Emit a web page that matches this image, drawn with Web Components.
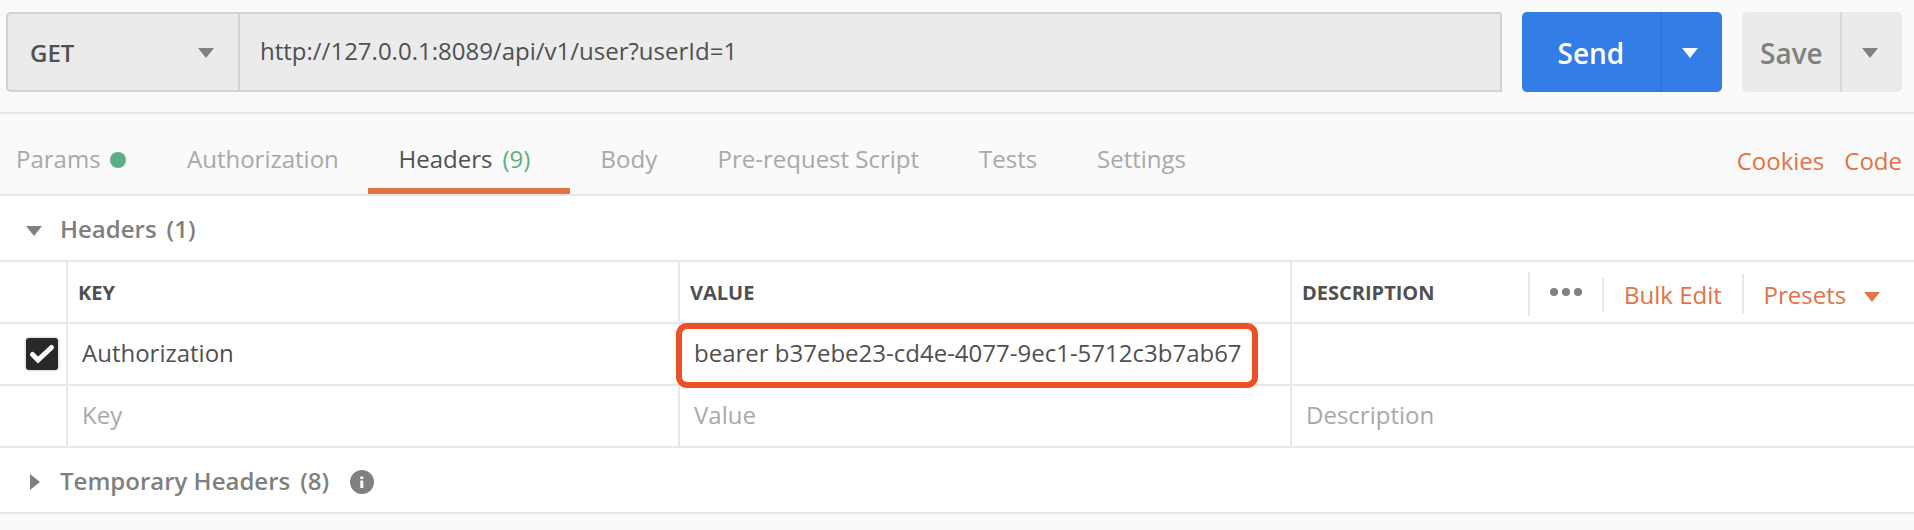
<!DOCTYPE html>
<html lang="en">
<head>
<meta charset="utf-8">
<title>Request builder</title>
<style>
html,body{margin:0;height:100%;background:#fafafa}
body{font:24px/32px "Open Sans","Noto Sans",sans-serif;color:#505050;overflow:hidden}
</style>
</head>
<body>
<request-builder></request-builder>
<script>
const define = (name, markup) => {
  const template = document.createElement('template');
  template.innerHTML = '<style>*{box-sizing:border-box}:host{box-sizing:border-box}</style>' + markup;
  customElements.define(name, class extends HTMLElement {
    constructor() {
      super();
      this.attachShadow({mode: 'open'}).append(template.content.cloneNode(true));
    }
  });
};

define('caret-icon', `
<style>
:host{display:block;width:16px;height:10px}
svg{display:block}
:host([side]){width:10px;height:16px}
:host([side]) .down,:host(:not([side])) .right{display:none}
</style>
<svg class="down" width="16" height="10" viewBox="0 0 16 10"><path d="M0 0h16L8 10z" fill="currentColor"/></svg>
<svg class="right" width="10" height="16" viewBox="0 0 10 16"><path d="M0 0v16l10-8z" fill="currentColor"/></svg>`);

define('split-button', `
<style>
:host{display:grid;grid-template-columns:1fr 62px;height:80px;border-radius:5px;overflow:hidden;background:#ebebeb;color:#808080;font-size:28px;font-weight:600;line-height:36px;--rule:#d9d9d9}
:host([primary]){background:#327de6;color:#fff;--rule:#2f74d9}
.label{padding:23px 0 0 var(--inset,18px)}
.menu{border-left:2px solid var(--rule);padding:36px 0 0 20px}
</style>
<div class="label"><slot></slot></div><div class="menu"><caret-icon></caret-icon></div>`);

define('url-bar', `
<style>
:host{display:grid;grid-template-columns:232px 1fr;width:1496px;height:80px;border:2px solid #d2d2d2;border-radius:5px 3px 0 5px;background:#ebebeb}
.method{display:flex;justify-content:space-between;border-right:2px solid #d2d2d2;padding:23px 24px 0 22px;font-weight:600}
caret-icon{margin-top:11px;color:#808080}
.url{padding:21px 0 0 20px}
</style>
<div class="method"><slot name="method"></slot><caret-icon></caret-icon></div><div class="url"><slot></slot></div>`);

define('tab-item', `
<style>
:host{display:flex;height:80px;padding:29px 0 0 30px;color:#a9a9a9;white-space:pre}
:host([active]){color:#505050;padding-left:30.5px;border-bottom:6px solid #e37245}
::slotted(i){width:16px;height:16px;border-radius:50%;background:#59b183;margin:9px 0 0 9px}
::slotted(b){font-weight:400;color:#59b183;margin-left:10px}
</style><slot></slot>`);

define('request-tabs', `
<style>
:host{display:flex;height:84px;border-top:2px solid #e8e8e8;border-bottom:2px solid #e8e8e8}
nav{display:grid;grid-template-columns:157px 211px 202px 117px 262px 118px 1fr;flex:1}
tab-item:first-child{padding-left:16px}
tab-item:nth-child(4),tab-item:nth-child(5){padding-left:30.5px}
aside{display:flex;gap:20px;padding:31px 12px 0 0;color:#e37245}
</style>
<nav>
<tab-item>Params<i></i></tab-item><tab-item>Authorization</tab-item><tab-item active>Headers<b>(9)</b></tab-item><tab-item>Body</tab-item><tab-item>Pre-request Script</tab-item><tab-item>Tests</tab-item><tab-item>Settings</tab-item>
</nav>
<aside><span>Cookies</span><span>Code</span></aside>`);

define('section-title', `
<style>
:host{display:grid;grid-template-columns:34px auto 1fr;height:64px;padding:17px 0 0 26px;color:#808080;font-weight:600;background:#fff}
caret-icon{margin-top:13px}
caret-icon[side]{margin:9px 0 0 4px}
:host(:not([closed])) caret-icon[side],:host([closed]) caret-icon:not([side]){display:none}
::slotted(span){margin-left:10px}
::slotted(svg){display:block;margin:5px 0 0 21px}
.text{display:flex}
</style>
<caret-icon></caret-icon><caret-icon side></caret-icon><div class="text"><slot></slot></div><slot name="extra"></slot>`);

define('check-box', `
<style>
:host{display:block;width:36px;height:36px}
svg{display:block}
</style>
<svg width="36" height="36" viewBox="0 0 36 36"><rect x=".5" y=".5" width="35" height="35" rx="5" fill="#e6e6e6"/><rect x="2" y="2" width="32" height="32" rx="3" fill="#282828"/><path d="M8.5 18.5l5.5 5.5L27.500 11.500" fill="none" stroke="#fff" stroke-width="5" stroke-linecap="round" stroke-linejoin="miter"/></svg>`);

define('header-row', `
<style>
:host{display:grid;grid-template-columns:68px 612px 612px 1fr;height:62px;border-bottom:2px solid #e8e8e8;background:#fff}
div{border-right:2px solid #e8e8e8;padding:13px 0 0 14px;position:relative}
div:last-child{border:0}
.check{padding:12px 0 0 24px}
:host([placeholder]){color:#a9a9a9}
:host([head]) div{padding:15px 0 0 10px;font-size:20px;font-weight:700}
:host([head]) div:last-child{display:flex;justify-content:space-between}
</style>
<div class="check"><slot name="check"></slot></div><div><slot name="key"></slot></div><div><slot name="value"></slot></div><div><slot name="description"></slot><slot name="tools"></slot></div>`);

define('table-tools', `
<style>
:host{display:flex;align-items:flex-start;margin-top:-15px;color:#e37245;font-size:24px;font-weight:400}
.rule{width:2px;background:#e8e8e8;flex:none}
.dots{display:flex;gap:4px;margin:26px 20px 0}
.dots i{width:8px;height:8px;border-radius:50%;background:#808080}
.bulk{width:138px;padding:17px 0 0 20px;white-space:nowrap}
.presets{width:120px;padding:17px 0 0 19.5px}
caret-icon{margin:30px 34px 0 0}
</style>
<div class="rule" style="height:44px;margin-top:10px"></div>
<div class="dots"><i></i><i></i><i></i></div>
<div class="rule" style="height:34px;margin-top:16px"></div>
<div class="bulk">Bulk Edit</div>
<div class="rule" style="height:40px;margin-top:12px"></div>
<div class="presets">Presets</div>
<caret-icon></caret-icon>`);

define('highlight-frame', `
<style>:host{display:block;position:absolute;left:-4px;top:-1px;width:582px;height:65px;border:6px solid #ee5024;border-radius:11px}</style>`);

define('request-builder', `
<style>
:host{display:block}
.top{display:flex;height:112px;padding:12px 12px 0 6px;gap:20px}
split-button[primary]{width:200px;--inset:35.5px}
split-button{width:160px}
.line{border-bottom:2px solid #e8e8e8}
section-title.line{height:66px}
</style>
<div class="top">
<url-bar><span slot="method">GET</span>http://127.0.0.1:8089/api/v1/user?userId=1</url-bar>
<split-button primary>Send</split-button>
<split-button>Save</split-button>
</div>
<request-tabs></request-tabs>
<section-title class="line">Headers<span>(1)</span></section-title>
<header-row head><span slot="key">KEY</span><span slot="value">VALUE</span><span slot="description">DESCRIPTION</span><table-tools slot="tools"></table-tools></header-row>
<header-row><check-box slot="check"></check-box><span slot="key">Authorization</span><span slot="value">bearer b37ebe23-cd4e-4077-9ec1-5712c3b7ab67</span><highlight-frame slot="value"></highlight-frame></header-row>
<header-row placeholder><span slot="key">Key</span><span slot="value">Value</span><span slot="description">Description</span></header-row>
<section-title closed class="line">Temporary Headers<span>(8)</span><svg slot="extra" width="24" height="24" viewBox="0 0 24 24"><circle cx="12" cy="12" r="12" fill="#808080"/><path d="M10.300 6.500h3v2.500h-3zM10.300 10.500h3V18h-3z" fill="#fff"/></svg></section-title>`);
</script>
</body>
</html>
